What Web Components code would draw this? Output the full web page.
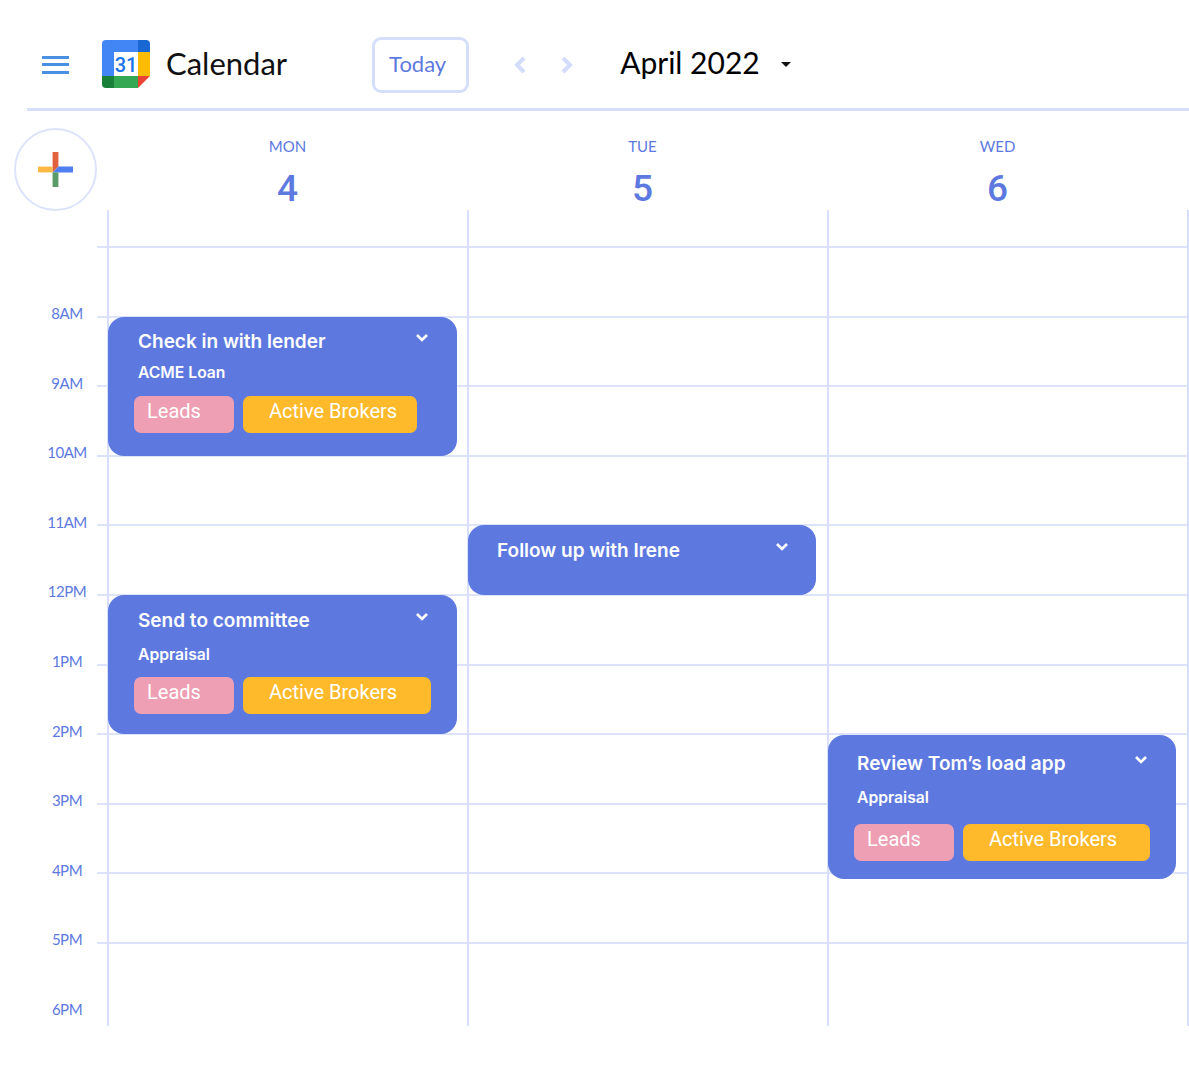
<!DOCTYPE html>
<html lang="en">

<head>
    <meta charset="UTF-8">
    <title>Calendar</title>
    <style>
        body { margin: 0; background: #fff; }
    </style>
</head>

<body>
    <script>
        // small helper, every element is just a template + open shadow root
        function define(name, html) {
            const template = document.createElement('template');
            template.innerHTML = html;
            window.customElements.define(name, class extends HTMLElement {
                constructor() {
                    super();
                    this.attachShadow({ mode: 'open' }).appendChild(template.content.cloneNode(true));
                }
            });
        }

        define('cal-logo', `
    <style>
    :host{ display:block; width:48px; height:48px; }
    svg{ display:block; }
    text{ font:500 20px Roboto, "Liberation Sans", sans-serif; fill:#1a73e8; }
    </style>
    <svg width="48" height="48" viewBox="0 0 48 48">
        <path d="M12 0H36V12H12V36H0V4Q0 0 4 0Z" fill="#4285f4"/>
        <path d="M36 0H44Q48 0 48 4V12H36Z" fill="#1967d2"/>
        <rect x="36" y="12" width="12" height="24" fill="#fbbc04"/>
        <path d="M0 36H12V48H4Q0 48 0 44Z" fill="#188038"/>
        <rect x="12" y="36" width="24" height="12" fill="#34a853"/>
        <path d="M36 36H48L36 48Z" fill="#ea4335"/>
        <text x="24" y="31.5" text-anchor="middle">31</text>
    </svg>
`);

        define('cal-topbar', `
    <style>
    :host{ display:flex; align-items:center; height:87px; margin-left:27px; padding-top:21px;
           border-bottom:3px solid #d5dffc; }
    .menu{ width:27px; height:18px; margin-left:15px; display:flex; flex-direction:column; justify-content:space-between; }
    .menu i{ display:block; height:3px; background:#4a90e2; }
    cal-logo{ margin-left:33px; margin-top:-2px; }
    .brand{ margin-left:16px; font:400 31px Lato, "Noto Sans", sans-serif; color:#111; margin-top:-4px; }
    .today{ margin-left:85px; width:85px; padding-right:6px; height:48px; padding-bottom:2px; border:3px solid #d5dffc; border-radius:9px; color:#5d79e0;
            font:400 22px Lato, sans-serif; display:flex; align-items:center; justify-content:center; }
    .nav{ display:flex; gap:33px; margin-left:44px; }
    .month{ margin-left:46px; font:400 30px Lato, "Noto Sans", sans-serif; color:#000; margin-top:-5px; }
    .caret{ margin-left:21px; }
    svg{ display:block; }
    </style>
    <div class="menu"><i></i><i></i><i></i></div>
    <cal-logo></cal-logo>
    <div class="brand">Calendar</div>
    <div class="today">Today</div>
    <div class="nav">
        <svg width="14" height="20" viewBox="0 0 14 20"><path d="M11 3L4 10L11 17" fill="none" stroke="#d3dcfb" stroke-width="4"/></svg>
        <svg width="14" height="20" viewBox="0 0 14 20"><path d="M3 3L10 10L3 17" fill="none" stroke="#d3dcfb" stroke-width="4"/></svg>
    </div>
    <div class="month">April 2022</div>
    <svg class="caret" width="10" height="5" viewBox="0 0 10 5"><path d="M0 0H10L5 5Z" fill="#111"/></svg>
`);

        define('cal-fab', `
    <style>
    :host{ display:block; width:83px; height:83px; box-sizing:border-box; border:2px solid #dde3fb; border-radius:50%; background:#fff;
           display:flex; align-items:center; justify-content:center; }
    </style>
    <svg width="35" height="35" viewBox="0 0 36 36">
        <polygon points="15,0 21,0 21,15 15,21" fill="#e0623f"/>
        <polygon points="0,15 15,15 15,21 0,21" fill="#fdb945"/>
        <polygon points="21,15 36,15 36,21 15,21" fill="#4f7ff0"/>
        <polygon points="15,21 21,21 21,36 15,36" fill="#5a9c68"/>
    </svg>
`);

        define('day-head', `
    <style>
    :host{ display:flex; flex-direction:column; align-items:center; width:355px; color:#5d79e0; }
    .name{ font:400 15px Lato, sans-serif; line-height:18px; margin-top:1px; }
    .num{ font:500 37px Roboto, sans-serif; line-height:42px; margin-top:13px; }
    </style>
    <div class="name"><slot name="name"></slot></div>
    <div class="num"><slot name="num"></slot></div>
`);

        define('cal-head', `
    <style>
    :host{ display:flex; height:99px; padding-left:14px; padding-top:17px; gap:13px; box-sizing:border-box; margin-bottom:0; position:relative; }
    .days{ display:flex; padding-top:8px; }
    </style>
    <slot name="fab"></slot>
    <div class="days"><slot></slot></div>
`);

        define('cal-time', `
    <style>
    :host{ display:block; margin-top:-12.5px; width:134px; text-align:center; color:#5d79e0; font:400 15px Lato, sans-serif; line-height:18px; letter-spacing:-.5px; align-self:start; }
    </style>
    <slot></slot>
`);

        // hour lines are built here so the rows stay in one place
        class CalGrid extends HTMLElement {
            constructor() {
                super();
                const root = this.attachShadow({ mode: 'open' });
                let lines = '';
                for (let r = 2; r <= 12; r++) {
                    lines += `<div class="hline" style="grid-row:${r}"></div>`;
                }
                let cols = '';
                for (let c = 2; c <= 5; c++) {
                    cols += `<div class="vline" style="grid-column:${c}"></div>`;
                }
                root.innerHTML = `
    <style>
    :host{ display:grid; grid-template-columns:108px repeat(3,360px) 1px;
           grid-template-rows:37px repeat(11,69.6px) 13.4px; height:816px; overflow:hidden; }
    .hline{ grid-column:1 / -1; margin-left:97px; margin-top:-1px; border-top:2px solid #dde3fb; }
    .vline{ grid-row:1 / -1; border-left:2px solid #d8dffc; margin-left:-1px; }
    </style>
    ${lines}${cols}
    <slot></slot>
    `;
            }
        }
        window.customElements.define('cal-grid', CalGrid);

        define('cal-tag', `
    <style>
    :host{ display:block; box-sizing:border-box; height:37px; border-radius:7px; color:#fff; font:400 20px Roboto, sans-serif; line-height:31px;
           padding-left:var(--tag-pad,13px); width:var(--tag-w,100px); background:var(--tag-bg,#ee9fb3); white-space:nowrap; }
    </style>
    <slot></slot>
`);

        define('cal-event', `
    <style>
    :host{ display:block; position:relative; box-sizing:border-box; z-index:1; align-self:start; margin-right:12px; height:var(--h,139px);
           background:#5d79e0; border-radius:16px; color:#fff; padding:var(--pt,13px) 0 0 var(--pl,30px); font-family:Inter, sans-serif; }
    .title{ font-size:19px; font-weight:600; line-height:24px; }
    .sub{ font-size:15.7px; font-weight:600; line-height:20px; margin-top:var(--sub-gap,9px); }
    .tags{ display:flex; gap:9px; margin-left:var(--tags-l,-4px); margin-top:var(--tags-gap,13px); }
    svg{ position:absolute; right:var(--chev-r,28px); top:var(--chev,16px); }
    </style>
    <div class="title"><slot name="title"></slot></div>
    <div class="sub"><slot name="sub"></slot></div>
    <div class="tags"><slot name="tags"></slot></div>
    <svg width="14" height="10" viewBox="0 0 14 10"><path d="M2 2L7 7L12 2" fill="none" stroke="#fff" stroke-width="2.6"/></svg>
`);

        define('cal-app', `
    <style>
    :host{ display:block; width:1189px; height:1065px; overflow:hidden; }
    </style>
    <slot></slot>
`);
    </script>

    <style>
        cal-tag.amber { --tag-bg: #ffba2c; --tag-pad: 26px; }
    </style>

    <cal-app>
        <cal-topbar></cal-topbar>
        <cal-head>
            <cal-fab slot="fab"></cal-fab>
            <day-head><span slot="name">MON</span><span slot="num">4</span></day-head>
            <day-head><span slot="name">TUE</span><span slot="num">5</span></day-head>
            <day-head><span slot="name">WED</span><span slot="num">6</span></day-head>
        </cal-head>
        <cal-grid>
            <cal-time style="grid-area:3/1">8AM</cal-time>
            <cal-time style="grid-area:4/1">9AM</cal-time>
            <cal-time style="grid-area:5/1">10AM</cal-time>
            <cal-time style="grid-area:6/1">11AM</cal-time>
            <cal-time style="grid-area:7/1">12PM</cal-time>
            <cal-time style="grid-area:8/1">1PM</cal-time>
            <cal-time style="grid-area:9/1">2PM</cal-time>
            <cal-time style="grid-area:10/1">3PM</cal-time>
            <cal-time style="grid-area:11/1">4PM</cal-time>
            <cal-time style="grid-area:12/1">5PM</cal-time>
            <cal-time style="grid-area:13/1">6PM</cal-time>

            <cal-event style="grid-area:3/2/5/3;margin-right:11px">
                <span slot="title">Check in with lender</span>
                <span slot="sub">ACME Loan</span>
                <cal-tag slot="tags">Leads</cal-tag>
                <cal-tag slot="tags" class="amber" style="--tag-w:174px">Active Brokers</cal-tag>
            </cal-event>
            <cal-event style="grid-area:7/2/9/3;margin-right:11px;--pt:14px;--chev:17px;--sub-gap:12px;--tags-gap:12px">
                <span slot="title">Send to committee</span>
                <span slot="sub">Appraisal</span>
                <cal-tag slot="tags">Leads</cal-tag>
                <cal-tag slot="tags" class="amber" style="--tag-w:188px">Active Brokers</cal-tag>
            </cal-event>
            <cal-event style="grid-area:6/3/8/4;--h:70px;--pt:14px;--pl:29px;--chev:17px;--chev-r:27px">
                <span slot="title">Follow up with Irene</span>
            </cal-event>
            <cal-event style="grid-area:9/4/11/5;margin-top:1px;--h:144px;--pt:17px;--pl:29px;--tags-l:-3px;--chev:20px;--sub-gap:12px;--tags-gap:16px">
                <span slot="title">Review Tom’s load app</span>
                <span slot="sub">Appraisal</span>
                <cal-tag slot="tags">Leads</cal-tag>
                <cal-tag slot="tags" class="amber" style="--tag-w:187px">Active Brokers</cal-tag>
            </cal-event>
        </cal-grid>
    </cal-app>
</body>

</html>
